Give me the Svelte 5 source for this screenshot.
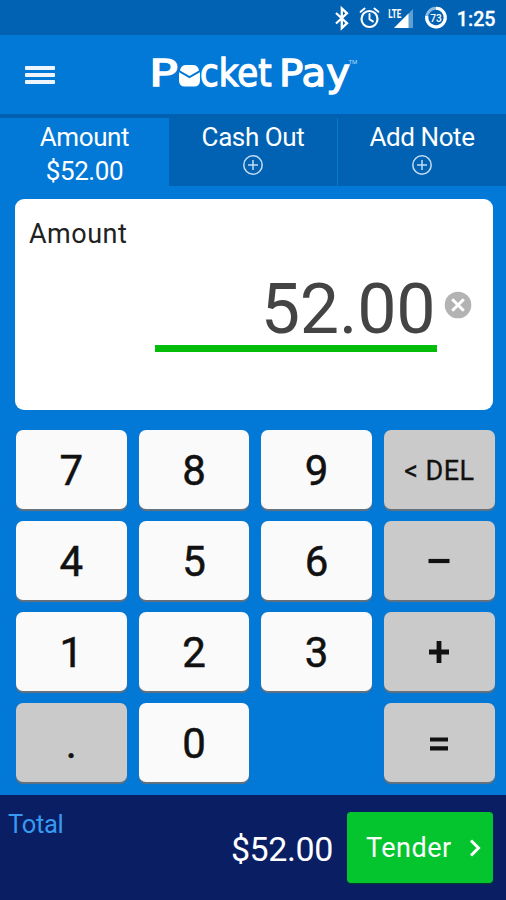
<script>
        let amount = '52.00';
        const tabs = [
                {label: 'Amount', value: '$52.00'},
                {label: 'Cash Out'},
                {label: 'Add Note'}
        ]
        const keys = [
                '7', '8', '9', '< DEL',
                '4', '5', '6', '−',
                '1', '2', '3', '+',
                '.', '0', '', '='
        ]
        let active = 0;
        const drawn = ['−', '+', '=']

        function isGrey(key) {
                return !/[0-9]/.test(key)
        }
        function press(key) {
                if (key == '< DEL') {
                        amount = amount.slice(0, -1);
                } else if (!drawn.includes(key)) {
                        amount = amount + key;
                }
        }
</script>

<div class="app">
        <div class="status">
                <svg width="176" height="35" viewBox="330 0 176 35">
                        <path d="M336 13l11 10.200-5.200 4.800V8.500l5.200 4.800-11 10.200" fill="none" stroke="#fff" stroke-width="2.3" />
                        <g fill="none" stroke="#fff" stroke-width="2.2" stroke-linecap="round">
                                <circle cx="369.5" cy="19" r="8" />
                                <path d="M369.5 14v5.2l3.4 2.2M360.6 11.800l4-3.2M378.4 11.800l-4-3.2" stroke-width="1.9" />
                        </g>
                        <path d="M394 28l19-19v19z" fill="#5f9fd3" />
                        <path d="M394 28l14.5-14.5V28z" fill="#fff" />
                        <text x="388.3" y="17.5" font-size="12" font-weight="700" textLength="13" lengthAdjust="spacingAndGlyphs">LTE</text>
                        <circle cx="436" cy="17.6" r="9.3" fill="none" stroke="#8dbce2" stroke-width="3" />
                        <path d="M436 8.3A9.3 9.3 0 1 1 426.8 16" fill="none" stroke="#fff" stroke-width="3" />
                        <text x="430.2" y="21.8" font-size="11.5" font-weight="500" textLength="11.6" lengthAdjust="spacingAndGlyphs">73</text>
                        <text x="456.8" y="26.3" font-size="20" font-weight="500" textLength="38.7" lengthAdjust="spacingAndGlyphs" stroke="#fff" stroke-width=".3">1:25</text>
                </svg>
        </div>

        <header>
                <button class="menu" aria-label="Menu"><i></i><i></i><i></i></button>
                <svg class="logo" width="212" height="48" viewBox="148 52 212 48" fill="#fff">
                        <g font-family="'DejaVu Sans'" font-size="37" stroke="#fff" stroke-width="1.300">
                                <text x="149" y="85.700" textLength="29" lengthAdjust="spacingAndGlyphs">P</text>
                                <text x="200" y="85.700" textLength="71.500" lengthAdjust="spacingAndGlyphs">cket</text>
                                <text x="279" y="85.700" textLength="71" lengthAdjust="spacingAndGlyphs">Pay</text>
                        </g>
                        <path d="M180 70.500q1-5.500 6-5.500h7q5 0 6 5.500l-9.500 5.500z" />
                        <path d="M179 72.300l10.500 6L200 72.300v8.200q0 6-6 6h-9q-6 0-6-6z" />
                        <text x="348.500" y="63.500" font-size="6" fill="#b9d8f3">TM</text>
                </svg>
        </header>

        <nav>
                {#each tabs as tab, i}
                        <button class="tab" class:active={i == active} on:click={() => active = i}>
                                <span>{tab.label}</span>
                                {#if tab.value}
                                        <span>{tab.value}</span>
                                {:else}
                                        <svg width="22" height="22" viewBox="0 0 22 22" fill="none" stroke="#c5dcf1" stroke-width="1.5">
                                                <circle cx="11" cy="11" r="9.200" />
                                                <path d="M11 6v10M6 11h10" />
                                        </svg>
                                {/if}
                        </button>
                {/each}
        </nav>

        <section class="card">
                <h2>Amount</h2>
                <div class="entry">
                        <div class="amount">{amount}</div>
                        <button class="clear" aria-label="Clear" on:click={() => amount = ''}>
                                <svg width="28" height="28" viewBox="0 0 28 28">
                                        <circle cx="14" cy="14" r="13.300" fill="#b3b3b3" />
                                        <path d="M8.200 8.200l11.600 11.600M19.800 8.200L8.200 19.800" stroke="#fff" stroke-width="3" />
                                </svg>
                        </button>
                </div>
        </section>

        <div class="keypad">
                {#each keys as key}
                        {#if key == ''}
                                <div></div>
                        {:else}
                                <button class="key" class:grey={isGrey(key)} class:del={key == '< DEL'} aria-label={key} on:click={() => press(key)}>
                                        {#if drawn.includes(key)}
                                                <svg width="24" height="24" viewBox="0 0 24 24" fill="none" stroke="#111" stroke-width="4.200">
                                                        {#if key == '−'}
                                                                <path d="M1.500 11h21" />
                                                        {:else if key == '+'}
                                                                <path d="M2 11h20M12 0v22" stroke-width="4.800" />
                                                        {:else}
                                                                <path d="M3 7.500h18M3 16.300h18" />
                                                        {/if}
                                                </svg>
                                        {:else}
                                                {key}
                                        {/if}
                                </button>
                        {/if}
                {/each}
        </div>

        <footer>
                <span class="label">Total</span>
                <span class="total">$52.00</span>
                <button class="tender">
                        Tender
                        <svg width="12" height="18" viewBox="0 0 12 18" fill="none" stroke="#fff" stroke-width="3">
                                <path d="M2 1.500L9.500 9 2 16.500" />
                        </svg>
                </button>
        </footer>
</div>

<style>
        :global(body) {
                margin: 0;
        }
        .app {
                width: 506px;
                height: 900px;
                display: flex;
                flex-direction: column;
                overflow: hidden;
                background: #0278d7;
                color: #fff;
                font-family: Roboto, sans-serif;
        }
        button {
                margin: 0;
                padding: 0;
                border: 0;
                background: none;
                color: inherit;
                font: inherit;
                letter-spacing: inherit;
        }
        svg {
                display: block;
        }
        .status {
                height: 35px;
                display: flex;
                justify-content: flex-end;
                background: #0162b3;
                fill: #fff;
        }
        header {
                height: 79px;
                display: flex;
                align-items: flex-start;
        }
        .menu {
                width: 30px;
                margin: 31px 0 0 25px;
                display: flex;
                flex-direction: column;
                gap: 3px;
        }
        .menu i {
                height: 4px;
                width: 30px;
                border-radius: 1px;
                background: #eef5fd;
        }
        .logo {
                margin: 17px 0 0 93px;
        }
        nav {
                height: 68px;
                display: grid;
                grid-template-columns: 169px 168px 169px;
                grid-template-rows: 68px;
                border-top: 4px solid #0160b0;
        }
        .tab {
                display: flex;
                flex-direction: column;
                align-items: center;
                justify-content: flex-start;
                padding-top: 2px;
                background: #0162b3;
                font-size: 26px;
                letter-spacing: -.4px;
                line-height: 34px;
        }
        .tab + .tab + .tab {
                border-left: 1px solid #0b78d0;
        }
        .tab.active {
                background: none;
        }
        .card {
                box-sizing: border-box;
                width: 478px;
                height: 211px;
                margin: 13px 0 0 14.500px;
                padding: 18px 21px 0 14.500px;
                border-radius: 9px;
                background: #fff;
        }
        h2 {
                margin: 0;
                color: #222;
                font-size: 27px;
                font-weight: 400;
                letter-spacing: .5px;
                line-height: 34px;
        }
        .entry {
                display: flex;
                justify-content: flex-end;
                margin-top: 16.500px;
        }
        .amount {
                box-sizing: border-box;
                width: 282px;
                height: 84.500px;
                padding-right: 1px;
                border-bottom: 7px solid #03bd0a;
                color: #444;
                font-size: 70px;
                letter-spacing: -.2px;
                line-height: 82px;
                text-align: right;
        }
        .clear {
                width: 28px;
                height: 28px;
                margin: 23.500px 0 0 7px;
        }
        .keypad {
                display: grid;
                grid-template-columns: repeat(4, 110.500px);
                grid-auto-rows: 79px;
                gap: 12px 12.200px;
                margin: 20px 0 0 16px;
        }
        .key {
                box-sizing: border-box;
                display: flex;
                align-items: center;
                justify-content: center;
                padding-top: 3px;
                border-radius: 7px;
                background: #fafafa;
                box-shadow: 0 1.500px 1px #66717c;
                color: #111;
                font-size: 42px;
                line-height: 76px;
                -webkit-text-stroke: .5px #111;
        }
        .key.grey {
                background: #cacaca;
        }
        .key.del {
                font-size: 27px;
                letter-spacing: .4px;
                -webkit-text-stroke: .3px #111;
        }
        footer {
                box-sizing: border-box;
                height: 105px;
                margin-top: auto;
                display: flex;
                padding: 0 13px 0 8px;
                background: #0a1e64;
        }
        .label {
                flex: 1;
                margin-top: 12px;
                color: #369bf0;
                font-size: 25.500px;
                letter-spacing: -.3px;
                line-height: 34px;
        }
        .total {
                margin-top: 34px;
                font-size: 34px;
                letter-spacing: -.4px;
                line-height: 40px;
        }
        .tender {
                box-sizing: border-box;
                width: 146px;
                height: 71px;
                margin: 17px 0 0 14px;
                padding: 0 12px 0 19px;
                display: flex;
                align-items: center;
                justify-content: space-between;
                border-radius: 4px;
                background: #05c52f;
                box-shadow: 0 1px 1px #04401f;
                font-size: 27px;
                letter-spacing: .5px;
        }
</style>
